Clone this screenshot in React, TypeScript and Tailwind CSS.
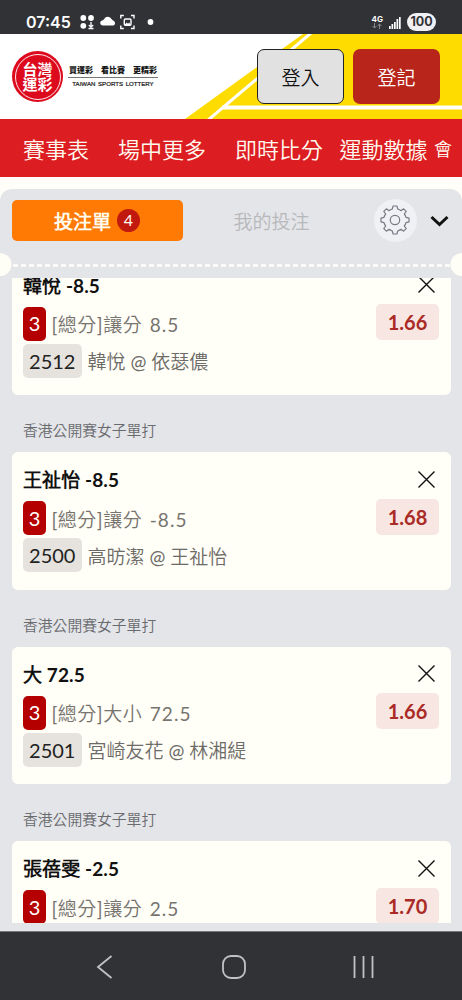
import React from "react";

const tc = "font-['Lato','Noto_Sans_CJK_TC_DemiLight','Noto_Sans_CJK_TC',sans-serif]";

type Bet = { title: string; kind: string; line: string; id: string; away: string; home: string; odds: string };

const bets: Bet[] = [
  { title: "韓悅 -8.5", kind: "[總分]讓分", line: "8.5", id: "2512", away: "韓悅", home: "依瑟儂", odds: "1.66" },
  { title: "王祉怡 -8.5", kind: "[總分]讓分", line: "-8.5", id: "2500", away: "高昉潔", home: "王祉怡", odds: "1.68" },
  { title: "大 72.5", kind: "[總分]大小", line: "72.5", id: "2501", away: "宮崎友花", home: "林湘緹", odds: "1.66" },
  { title: "張蓓雯 -2.5", kind: "[總分]讓分", line: "2.5", id: "", away: "", home: "", odds: "1.70" },
];

function StatusBar() {
  return (
    <div className="flex h-[34px] shrink-0 items-end bg-[#313236] pb-[2px] pl-[26px] pr-[26px] text-white">
      <span className="w-[45px] whitespace-nowrap font-['Inter',sans-serif] text-[16px] font-semibold leading-[20px]">07:45</span>
      <svg className="ml-[8px] h-[20px] w-[78px]" viewBox="79 12 78 20" fill="#fff">
        <circle cx="83.3" cy="18" r="2.9" />
        <circle cx="91" cy="18" r="2.9" />
        <circle cx="83.3" cy="25.8" r="2.9" />
        <path d="M91 22v5M88.8 25l2.2 2.2 2.2-2.2M88.5 28.5h5" stroke="#fff" strokeWidth="1.3" fill="none" />
        <path d="M102.500 25.500a2.500 2.500 0 0 1-.5-4.900q1.500-.4 2.300-1.800a4 4 0 0 1 6.800-.2q.8 1.600 2.400 2.200a2.500 2.500 0 0 1-.2 4.700z" />
        <path d="M120.800 18.500v-3h3M131 15.500h3v3M134 25.500v3h-3M123.800 28.500h-3v-3" stroke="#fff" strokeWidth="1.400" fill="none" />
        <rect x="124.300" y="19" width="6.700" height="6.200" rx="1" stroke="#fff" strokeWidth="1.400" fill="none" />
        <path d="M124.500 25l2.200-2.500 1.300 1.300 1.200-1.300 1.500 2.500z" />
        <circle cx="150.500" cy="22" r="2.900" />
      </svg>
      <div className="ml-auto flex h-[20px] items-center">
        <div className="flex flex-col items-center">
          <span className="font-['Inter',sans-serif] text-[8px] font-bold leading-[8px]">4G</span>
          <svg className="h-[6px] w-[10px]" viewBox="0 0 10 6" stroke="#8c8c90" fill="none" strokeWidth="1"><path d="M2.500 0v5M.5 3l2 2 2-2M7.500 6V.8M5.500 3l2-2 2 2" /></svg>
        </div>
        <svg className="ml-[6px] h-[13px] w-[12px]" viewBox="0 0 12 13" fill="#fff"><path d="M0 10h1.700v3H0zM2.500 8h1.700v5H2.500zM5 6h1.700v7H5zM7.500 3h1.700v10H7.500zM10 1h1.700v12H10z" /></svg>
        <span className="ml-[6px] flex h-[18px] w-[29px] items-center justify-center rounded-full bg-[#f1f1f3] font-['Inter',sans-serif] text-[12.500px] font-bold text-[#313236]">100</span>
      </div>
    </div>
  );
}

function Header() {
  return (
    <header className="relative flex h-[85px] shrink-0 items-start bg-white pl-[12px] pr-[22px]">
      <svg className="absolute right-0 top-0 h-[85px] w-[280px]" viewBox="182 34 280 85">
        <path d="M303 34H462V119H185z" fill="#ffdc00" />
        <path d="M311 33L207 121" stroke="#fff" strokeWidth="3" fill="none" />
        <path d="M222 107.500H462" stroke="#fff" strokeWidth="4" fill="none" />
      </svg>
      <div className="relative mt-[17px] flex h-[51px] w-[51px] items-center justify-center rounded-full bg-[#dd0a1e]">
        <div className="flex h-[46px] w-[46px] flex-col items-center justify-center rounded-full border border-white/90 pb-px font-['Noto_Sans_CJK_TC',sans-serif] text-[15px] font-bold leading-[15.500px] text-white">
          <span>台灣</span>
          <span>運彩</span>
        </div>
      </div>
      <div className="relative ml-[5px] mt-[29px] w-[90px] text-center text-[#151515]">
        <div className="flex h-[14px] items-center justify-between px-[1px] font-['Noto_Sans_CJK_TC',sans-serif] text-[8px] font-black leading-[14px]"><span>買運彩</span><span>看比賽</span><span>更精彩</span></div>
        <div className="whitespace-nowrap border-t border-[#777] font-['Liberation_Sans',sans-serif] text-[6.100px] leading-[11px] [-webkit-text-stroke:0.2px] [word-spacing:1px]">TAIWAN SPORTS LOTTERY</div>
      </div>
      <div className={`relative ml-auto mt-[15px] flex gap-[9px] text-[19px] ${tc}`}>
        <button className="h-[55px] w-[87px] rounded-[7px] border border-[#222] bg-[#e1e1e2] pt-[3px] text-[#111]">登入</button>
        <button className="h-[55px] w-[87px] rounded-[7px] bg-[#b8251b] pt-[3px] text-white">登記</button>
      </div>
    </header>
  );
}

function Nav() {
  return (
    <nav className={`flex h-[58px] shrink-0 items-center whitespace-nowrap bg-[#dc1d21] pl-[23px] pt-[3px] text-[22px] text-[#fffaf0] ${tc}`}>
      <span className="w-[95px]">賽事表</span>
      <span className="w-[117px]">場中更多</span>
      <span className="w-[104.500px]">即時比分</span>
      <span className="w-[94.500px]">運動數據</span>
      <span className="text-[18px]">會</span>
    </nav>
  );
}

function Gear() {
  return (
    <svg className="h-[30px] w-[30px]" viewBox="-15 -15 30 30" fill="none" stroke="#777a82" strokeWidth="1.200" strokeLinejoin="round">
      <path d="M-1.900-14H1.900L2.700-11Q4.800-10.300 6-9.300L8.600-11.200 11.200-8.600 9.300-6Q10.300-4.800 11-2.700L14-1.900V1.900L11 2.700Q10.300 4.800 9.300 6L11.200 8.600 8.600 11.200 6 9.300Q4.800 10.300 2.700 11L1.900 14H-1.900L-2.700 11Q-4.800 10.300-6 9.300L-8.600 11.200-11.200 8.600-9.300 6Q-10.300 4.800-11 2.700L-14 1.900V-1.900L-11-2.700Q-10.300-4.800-9.300-6L-11.200-8.600-8.600-11.200-6-9.300Q-4.800-10.300-2.700-11z" />
      <circle r="4.700" />
    </svg>
  );
}

function SlipTabs() {
  return (
    <div className="relative h-[89.500px] shrink-0">
      <div className="flex items-center pl-[11.500px] pr-[13px] pt-[10px]">
        <div className="flex h-[41px] w-[171px] items-center justify-center gap-[6px] rounded-[5px] bg-[#ff7a05] text-[19px] font-bold text-[#fffdf0]">
          <span className="pt-[4px] leading-[24px]">投注單</span>
          <span className="flex h-[23px] w-[23px] items-center justify-center rounded-full bg-[#c2190f] text-[16px] font-normal">4</span>
        </div>
        <span className="ml-[51px] w-[140px] pt-[4px] text-[19px] text-[#b7b8bb]">我的投注</span>
        <div className="flex h-[43px] w-[43px] shrink-0 items-center justify-center rounded-full bg-[#f0f1f5]"><Gear /></div>
        <svg className="ml-auto mt-[2px] h-[12px] w-[19px]" viewBox="0 0 19 12" fill="none" stroke="#111" strokeWidth="3"><path d="M1.500 2l8 7.500 8-7.500" /></svg>
      </div>
      <svg className="absolute left-0 top-[64px] h-[24px] w-[462px]" viewBox="0 0 462 24">
        <path d="M13 12.500H450" stroke="#fffefa" strokeWidth="2.500" strokeDasharray="5 3" />
        <circle cx="0" cy="11.500" r="11.500" fill="#fffef6" />
        <circle cx="462" cy="11.500" r="11.500" fill="#fffef6" />
      </svg>
    </div>
  );
}

function Card({ bet }: { bet: Bet }) {
  return (
    <article className="flex h-[137.500px] justify-between rounded-[6px] bg-[#fffef7] px-[11.500px]">
      <div className="flex flex-col items-start whitespace-nowrap">
        <h2 className="mt-[14px] h-[28px] text-[19px] font-bold leading-[28px] tracking-[0.100px] text-[#111]">{bet.title}</h2>
        <div className="mt-[7px] flex h-[34px] items-center">
          <span className="flex h-[34px] w-[23px] items-center justify-center rounded-[5px] bg-[#b50000] pb-px text-[20px] text-white">3</span>
          <span className="ml-[5.500px] mt-[4px] text-[19px] tracking-[0.500px] text-[#77746f]">{bet.kind}</span>
          <span className="ml-[7.500px] mt-[4px] text-[19px] tracking-[1.100px] text-[#77746f]">{bet.line}</span>
        </div>
        {bet.id && (
          <div className="mt-[3px] flex h-[34px] items-center">
            <span className="flex h-[34px] w-[58.500px] items-center justify-center rounded-[5px] bg-[#e6e3de] text-[20px] text-[#222]">{bet.id}</span>
            <span className="ml-[6px] mt-[4px] text-[19px] text-[#6d6b67]">{bet.away} @ {bet.home}</span>
          </div>
        )}
      </div>
      <div className="flex flex-col items-end">
        <svg className="mr-[4px] mt-[18.500px] h-[17px] w-[17px] shrink-0" viewBox="0 0 17 17" stroke="#111" strokeWidth="1.400"><path d="M.5.5l16 16M16.500.5l-16 16" /></svg>
        <span className="mt-[11px] flex h-[36px] w-[63px] items-center justify-center rounded-[5px] bg-[#f7e6e1] text-[20px] font-bold text-[#aa2b26]">{bet.odds}</span>
      </div>
    </article>
  );
}

export default function App() {
  return (
    <div className="flex h-[1000px] w-[462px] flex-col overflow-hidden bg-[#fffef9]">
      <StatusBar />
      <Header />
      <Nav />
      <main className={`mt-[11.500px] flex min-h-0 flex-1 flex-col rounded-t-[12px] bg-[#e4e5e9] ${tc}`}>
        <SlipTabs />
        <div className="h-[645px] shrink-0 overflow-hidden px-[11.500px]">
          <div className="-mt-[20.500px] flex flex-col">
            {bets.map((bet, i) => (
              <section key={bet.title}>
                {i > 0 && <p className="h-[57px] pl-[11.500px] pt-[24px] text-[14.800px] leading-[22px] text-[#6a6b6f]">香港公開賽女子單打</p>}
                <Card bet={bet} />
              </section>
            ))}
          </div>
        </div>
      </main>
      <footer className="flex h-[69px] shrink-0 items-center border-t border-[#77787b] bg-[#313236]">
        <svg className="mt-[2px] h-[26px] w-[462px]" viewBox="0 954 462 26" fill="none" stroke="#c2c2c5" strokeWidth="1.800">
          <path d="M111.500 956L98 967l13.500 11M354.500 956v22M363.500 956v22M372.500 956v22" />
          <rect x="223" y="956" width="22" height="22" rx="8" />
        </svg>
      </footer>
    </div>
  );
}
